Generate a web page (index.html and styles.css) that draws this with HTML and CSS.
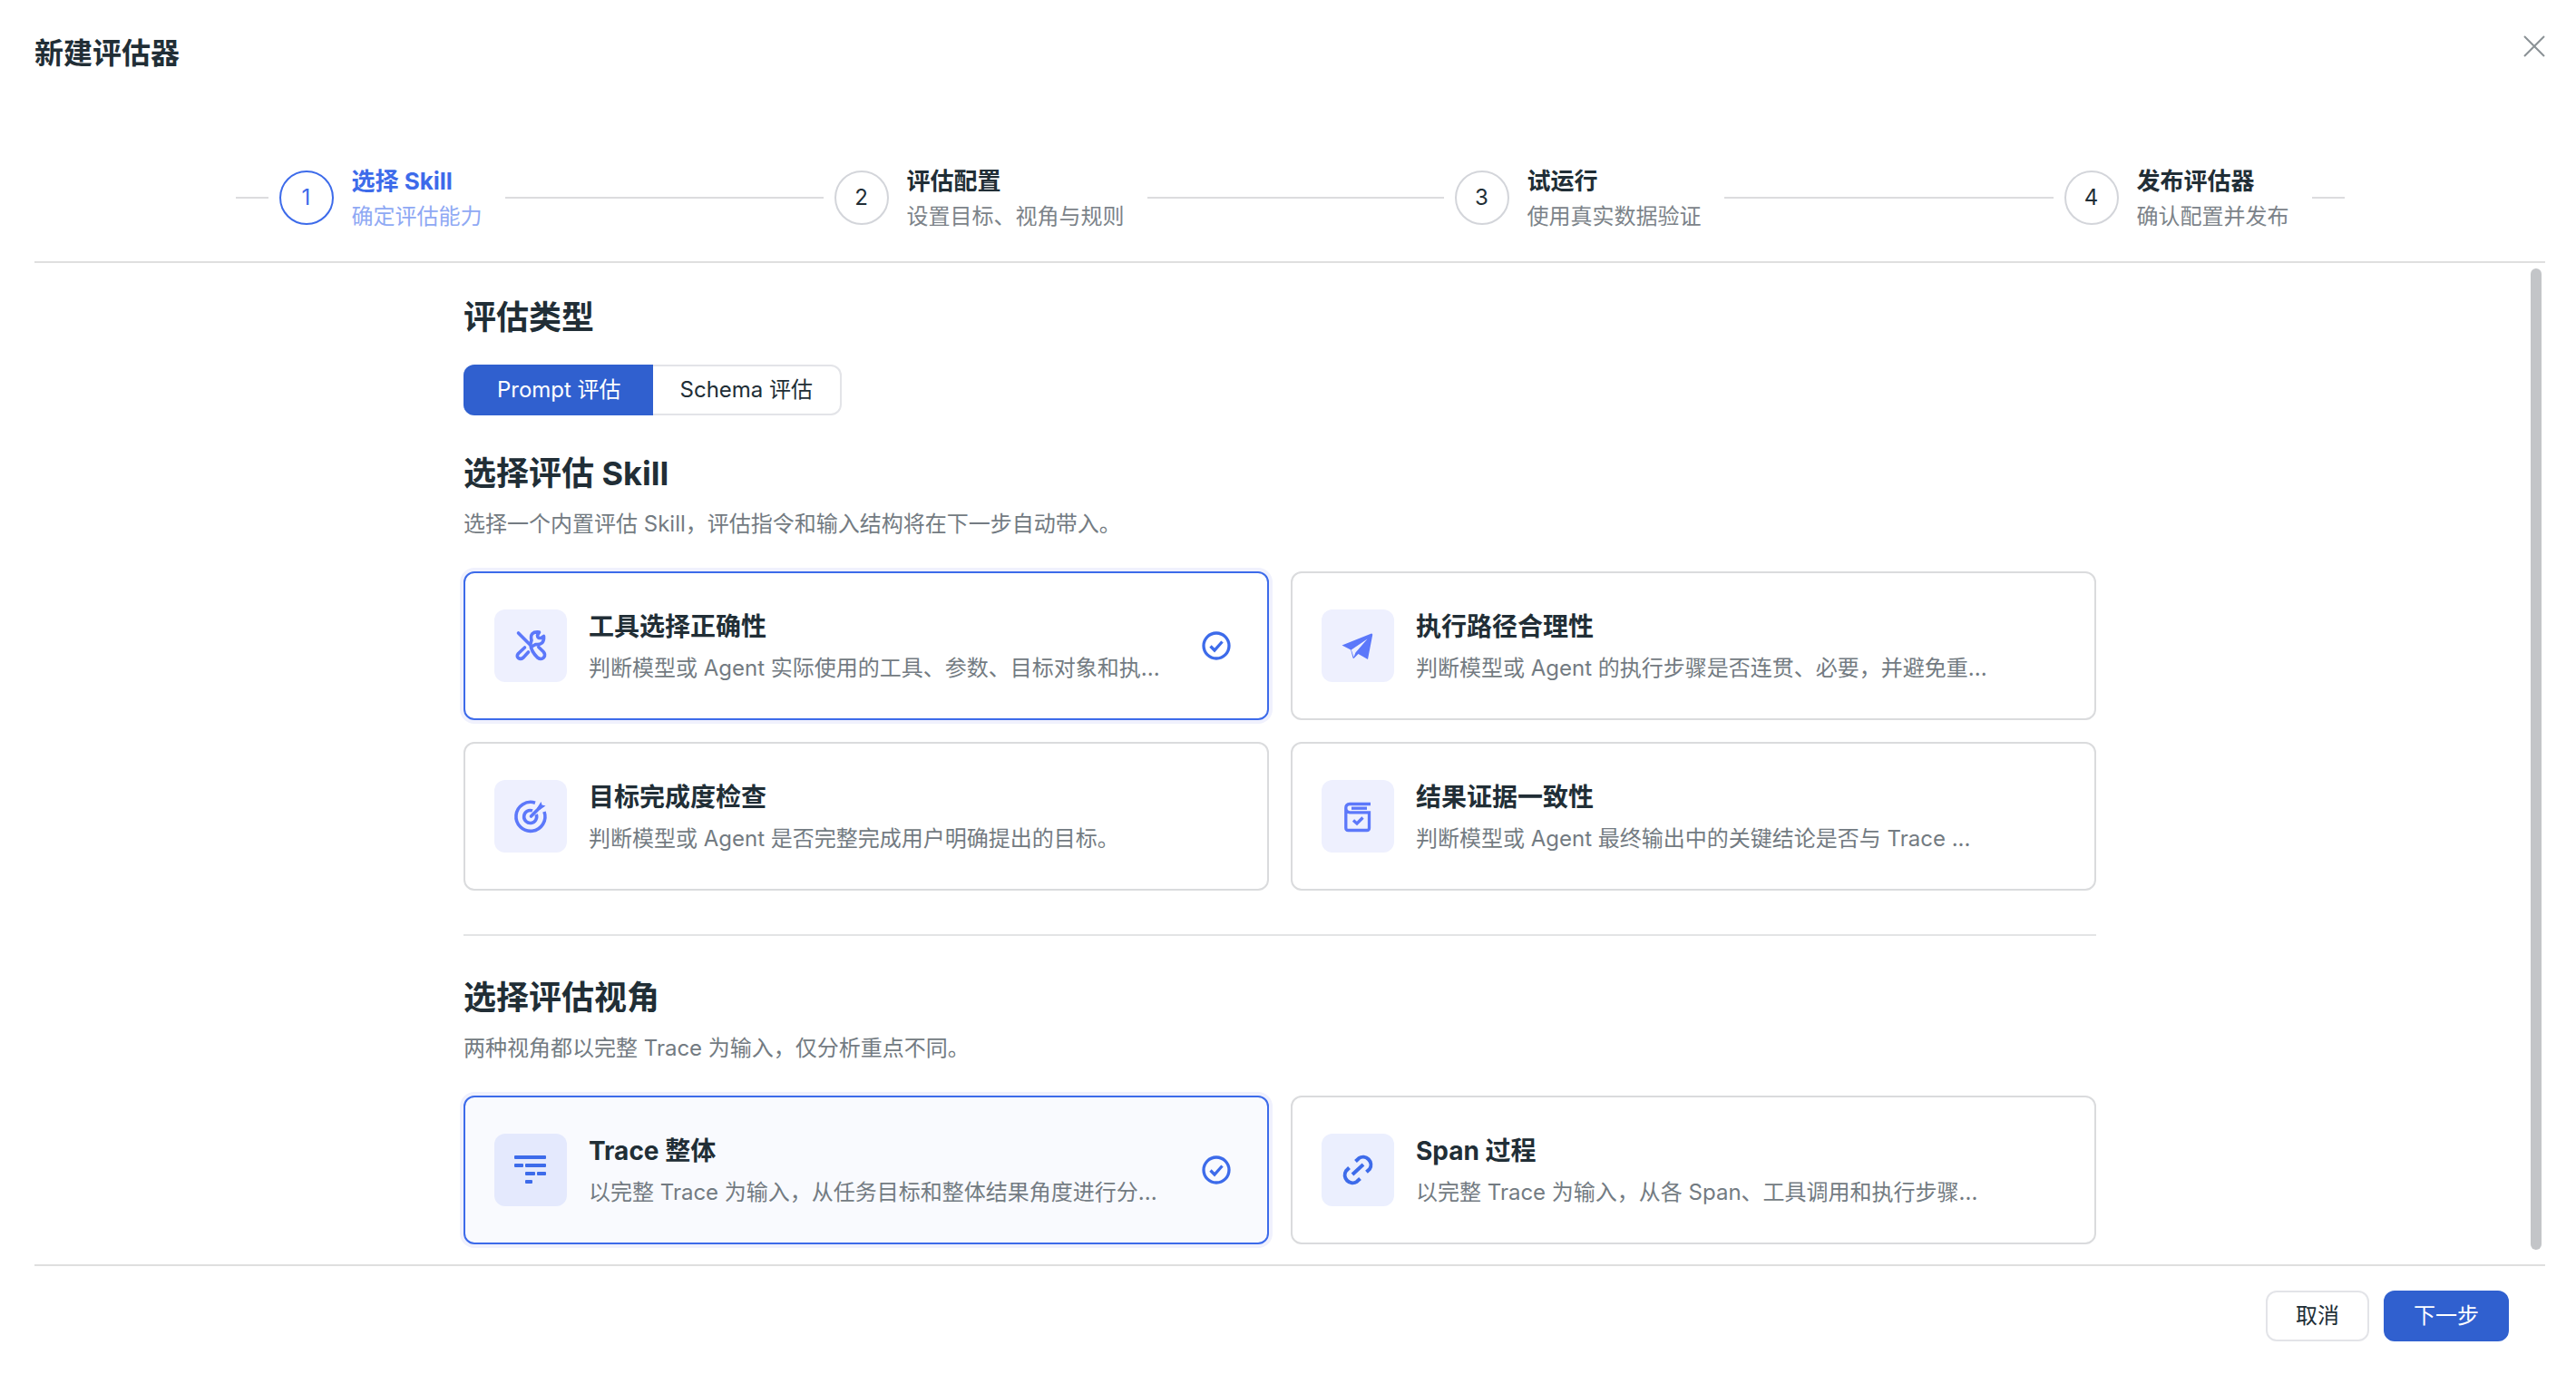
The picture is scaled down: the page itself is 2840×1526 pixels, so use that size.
FILE: index.html
```html
<!DOCTYPE html>
<html lang="zh-CN">

<head>
    <meta charset="utf-8" />
    <meta name="viewport" content="width=device-width, initial-scale=1">
    <title>新建评估器</title>
    <link rel="stylesheet" href="styles.css">
</head>

<body>
    <div class="page">
        <header class="page-header">
            <h1>新建评估器</h1>
            <button class="close-btn" type="button" aria-label="关闭">
                <svg viewBox="0 0 24 24" fill="none" stroke="currentColor" stroke-width="2">
                    <path d="M1 1L23 23M23 1L1 23" />
                </svg>
            </button>
        </header>

        <ol class="steps">
            <li class="step active">
                <span class="step-num">1</span>
                <div class="step-text">
                    <div class="step-title">选择 Skill</div>
                    <div class="step-desc">确定评估能力</div>
                </div>
            </li>
            <li class="step">
                <span class="step-num">2</span>
                <div class="step-text">
                    <div class="step-title">评估配置</div>
                    <div class="step-desc">设置目标、视角与规则</div>
                </div>
            </li>
            <li class="step">
                <span class="step-num">3</span>
                <div class="step-text">
                    <div class="step-title">试运行</div>
                    <div class="step-desc">使用真实数据验证</div>
                </div>
            </li>
            <li class="step">
                <span class="step-num">4</span>
                <div class="step-text">
                    <div class="step-title">发布评估器</div>
                    <div class="step-desc">确认配置并发布</div>
                </div>
            </li>
        </ol>

        <div class="scroll-area">
            <main class="content">
                <h2>评估类型</h2>
                <div class="segment" role="radiogroup" aria-label="评估类型">
                    <label class="segment-item">
                        <input type="radio" name="type" checked>
                        <span>Prompt 评估</span>
                    </label>
                    <label class="segment-item">
                        <input type="radio" name="type">
                        <span>Schema 评估</span>
                    </label>
                </div>

                <section class="skill-section">
                    <h2>选择评估 Skill</h2>
                    <p class="hint">选择一个内置评估 Skill，评估指令和输入结构将在下一步自动带入。</p>
                    <div class="cards">
                        <label class="card">
                            <input type="radio" name="skill" checked>
                            <span class="card-icon">
                                <svg viewBox="0 0 40 40" fill="none" stroke="currentColor" stroke-width="3.600" stroke-linecap="round" stroke-linejoin="round">
                                    <path d="M6.500 6L20 19.500C20.500 25 23 28.500 27.500 33Q31.500 36 34.500 33Q37 29.500 34 26.500L28.800 21.500" />
                                    <path d="M13.500 22L6.500 28.500Q4 31.500 6.500 33.500Q9 35.500 12 33L17.500 27" />
                                    <path d="M20 17.500L21 14Q18.500 4 29.500 5L27.500 8.500Q27.500 12 31.500 11.500L34.500 9.500Q35.500 19.500 25.500 18.500L22 20.500" />
                                </svg>
                            </span>
                            <span class="card-text">
                                <span class="card-title">工具选择正确性</span>
                                <span class="card-desc">判断模型或 Agent 实际使用的工具、参数、目标对象和执...</span>
                            </span>
                            <svg class="card-check" viewBox="0 0 32 32" fill="none" stroke="currentColor" stroke-width="3.300">
                                <circle cx="16" cy="16" r="14" />
                                <path d="M9.500 16.500L14 21L22.500 11.500" />
                            </svg>
                        </label>
                        <label class="card">
                            <input type="radio" name="skill">
                            <span class="card-icon">
                                <svg viewBox="0 0 40 40" fill="currentColor">
                                    <path d="M2.500 19.500L35 6.500Q36.500 6.500 36.200 8L31 35L20.500 29L15.500 34Q14.300 34 14.200 32L12.200 24.500Z" />
                                    <path class="cut" d="M12.800 24.500L30.500 12.500L17.500 27.500L15.500 32.500Z" />
                                </svg>
                            </span>
                            <span class="card-text">
                                <span class="card-title">执行路径合理性</span>
                                <span class="card-desc">判断模型或 Agent 的执行步骤是否连贯、必要，并避免重...</span>
                            </span>
                        </label>
                        <label class="card">
                            <input type="radio" name="skill">
                            <span class="card-icon">
                                <svg viewBox="0 0 40 40" fill="none" stroke="currentColor" stroke-width="3.600">
                                    <path d="M25 5.200A16 16 0 1 0 35 15" />
                                    <path d="M22 13.900A7 7 0 1 0 26.200 18" />
                                    <path d="M20.500 20L31 9.500" stroke-linecap="round" />
                                    <path d="M27 11L31.500 4L32.500 7.500L36.500 8.500L30 13Z" fill="currentColor" stroke="none" />
                                </svg>
                            </span>
                            <span class="card-text">
                                <span class="card-title">目标完成度检查</span>
                                <span class="card-desc">判断模型或 Agent 是否完整完成用户明确提出的目标。</span>
                            </span>
                        </label>
                        <label class="card">
                            <input type="radio" name="skill">
                            <span class="card-icon">
                                <svg viewBox="0 0 40 40" fill="none" stroke="currentColor" stroke-width="3.300">
                                    <path d="M34 6.500H11Q6.800 6.500 6.800 10.800V33Q6.800 35.500 9.500 35.500H30Q32.500 35.500 32.500 33V15.800H11Q6.800 15.500 6.800 10.800" />
                                    <path d="M13 11.200H30" />
                                    <path d="M15 24.500L19 28L25.500 21.500" />
                                </svg>
                            </span>
                            <span class="card-text">
                                <span class="card-title">结果证据一致性</span>
                                <span class="card-desc">判断模型或 Agent 最终输出中的关键结论是否与 Trace ...</span>
                            </span>
                        </label>
                    </div>
                </section>

                <section class="view-section">
                    <h2>选择评估视角</h2>
                    <p class="hint">两种视角都以完整 Trace 为输入，仅分析重点不同。</p>
                    <div class="cards">
                        <label class="card">
                            <input type="radio" name="view" checked>
                            <span class="card-icon">
                                <svg viewBox="0 0 40 40" fill="currentColor">
                                    <rect x="2" y="4" width="35" height="4" rx="1" />
                                    <rect x="2" y="13" width="10" height="4" rx="1" />
                                    <rect x="14" y="13" width="23" height="4" rx="1" />
                                    <rect x="14" y="22" width="11" height="4" rx="1" />
                                    <rect x="27" y="22" width="10" height="4" rx="1" />
                                    <rect x="14" y="31" width="8" height="4" rx="1" />
                                </svg>
                            </span>
                            <span class="card-text">
                                <span class="card-title">Trace 整体</span>
                                <span class="card-desc">以完整 Trace 为输入，从任务目标和整体结果角度进行分...</span>
                            </span>
                            <svg class="card-check" viewBox="0 0 32 32" fill="none" stroke="currentColor" stroke-width="3.300">
                                <circle cx="16" cy="16" r="14" />
                                <path d="M9.500 16.500L14 21L22.500 11.500" />
                            </svg>
                        </label>
                        <label class="card">
                            <input type="radio" name="view">
                            <span class="card-icon">
                                <svg viewBox="0 0 40 40" fill="none" stroke="currentColor" stroke-width="4">
                                    <path d="M14 25L26 14" />
                                    <path d="M17.500 10.500L21 7.200A8.600 8.600 0 0 1 33 19L29.500 22.300" />
                                    <path d="M10.500 17.500L7 21A8.600 8.600 0 0 0 19 32.800L22.500 29.500" />
                                </svg>
                            </span>
                            <span class="card-text">
                                <span class="card-title">Span 过程</span>
                                <span class="card-desc">以完整 Trace 为输入，从各 Span、工具调用和执行步骤...</span>
                            </span>
                        </label>
                    </div>
                </section>
            </main>
            <div class="scrollbar"></div>
        </div>

        <footer class="page-footer">
            <button class="btn" type="button">取消</button>
            <button class="btn btn-primary" type="button">下一步</button>
        </footer>
    </div>
</body>

</html>
```
FILE: styles.css
```css
* {
    box-sizing: border-box;
}

body {
    margin: 0;
    background: #fff;
    color: #212e36;
    font-family: Inter, 'Noto Sans CJK SC', sans-serif;
    font-size: 24px;
    line-height: 36px;
}

h1,
h2,
p,
ol {
    margin: 0;
    padding: 0;
}

button {
    font: inherit;
    color: inherit;
    cursor: pointer;
}

.page {
    min-height: 100vh;
    padding: 0 34px 0 38px;
}

/* header */
.page-header {
    display: flex;
    justify-content: space-between;
    align-items: flex-start;
    padding: 39px 0 98px;
}

h1 {
    font-size: 32px;
    line-height: 40px;
    font-weight: 600;
}

.close-btn {
    border: 0;
    padding: 0;
    background: none;
    color: #8b9296;
}

.close-btn svg {
    display: block;
    width: 24px;
    height: 24px;
}

/* steps */
.steps {
    display: flex;
    list-style: none;
    padding: 0 70px 29px 58px;
    border-bottom: 2px solid #dfdfdf;
}

.step {
    flex: 1 1 0;
    display: flex;
    align-items: center;
}

.step::before,
.step::after {
    content: '';
    flex: 1;
    height: 2px;
    background: #dcdcde;
}

.step::before {
    margin-right: 12px;
}

.step::after {
    margin-left: 25px;
}

.step:first-child::before {
    background: linear-gradient(#dcdcde, #dcdcde) right / 36px 2px no-repeat;
}

.step:last-child::after {
    background: linear-gradient(#dcdcde, #dcdcde) left / 36px 2px no-repeat;
}

.step-num {
    width: 60px;
    height: 60px;
    margin-right: 20px;
    border: 2px solid #d3d5da;
    border-radius: 50%;
    line-height: 56px;
    text-align: center;
}

.step-text {
    padding-top: 4px;
}

.step-title {
    font-size: 26px;
    line-height: 38px;
    font-weight: 700;
}

.step-desc {
    line-height: 40px;
    color: #7c8389;
}

.step.active .step-num {
    border-color: #3d6bea;
    color: #3d6bea;
}

.step.active .step-title {
    color: #3d6bea;
}

.step.active .step-desc {
    color: #8fa9f4;
}

/* content */
.scroll-area {
    display: flex;
    justify-content: space-between;
    padding: 6px 4px 16px 0;
}

.scrollbar {
    width: 12px;
    border-radius: 6px;
    background: #c3c5c8;
}

.content {
    width: 1800px;
    max-width: 90%;
    margin: 0 auto;
    padding: 30px 6px 6px 0;
    box-sizing: content-box;
}

h2 {
    font-size: 36px;
    line-height: 48px;
    font-weight: 700;
}

.hint {
    margin: 14px 0 34px;
    color: #737b82;
}

label input {
    position: absolute;
    opacity: 0;
    margin: 0;
}

.segment {
    display: inline-grid;
    grid-template-columns: 1fr 1fr;
    margin-top: 28px;
}

.segment-item span {
    display: block;
    padding: 0 30px;
    border: 2px solid #e3e4e8;
    border-left: 0;
    border-radius: 0 12px 12px 0;
    line-height: 52px;
    text-align: center;
    cursor: pointer;
}

.segment-item:first-child span {
    padding: 0 28px 0 32px;
    border-radius: 12px 0 0 12px;
}

.segment-item input:checked + span {
    background: #3060cf;
    border-color: #3060cf;
    color: #fff;
}

.skill-section {
    margin-top: 40px;
    padding-bottom: 48px;
    border-bottom: 2px solid #e3e4e5;
}

.view-section {
    padding-top: 44px;
}

.cards {
    display: grid;
    grid-template-columns: 1fr 1fr;
    gap: 24px;
}

.card {
    position: relative;
    display: flex;
    align-items: center;
    gap: 24px;
    height: 164px;
    padding: 0 40px 0 32px;
    border: 2px solid #dadbdd;
    border-radius: 12px;
    cursor: pointer;
}

.card:has(input:checked) {
    border-color: #3d6bea;
    box-shadow: 0 0 0 4px #f0f1fd;
}

.card-icon {
    flex: none;
    padding: 20px;
    border-radius: 12px;
    background: #eef0fe;
    color: #5c78fa;
}

.card-icon svg {
    display: block;
    width: 40px;
    height: 40px;
}

.card-icon .cut {
    fill: #eef0fe;
}

.card-text {
    flex: 1;
    min-width: 0;
}

.card-title,
.card-desc {
    display: block;
    white-space: nowrap;
    overflow: hidden;
    text-overflow: ellipsis;
}

.card-title {
    margin-bottom: 6px;
    font-size: 28px;
    line-height: 44px;
    font-weight: 700;
}

.card-desc {
    color: #737b82;
}

.card-check {
    flex: none;
    width: 32px;
    height: 32px;
    color: #3d6bea;
}

.view-section .card-icon {
    background: #ebeffe;
    color: #3d6bea;
}

.view-section .card:has(input:checked) {
    background: #f9fafe;
}

.view-section .card:has(input:checked) .card-icon {
    background: #e4e9fd;
}

/* footer */
.page-footer {
    display: flex;
    justify-content: flex-end;
    gap: 16px;
    padding: 27px 40px 46px 0;
    border-top: 2px solid #dfdfdf;
}

.btn {
    padding: 0 31px;
    border: 2px solid #e3e4e8;
    border-radius: 12px;
    background: #fff;
    line-height: 52px;
}

.btn-primary {
    background: #3060cf;
    border-color: #3060cf;
    color: #fff;
}
```
